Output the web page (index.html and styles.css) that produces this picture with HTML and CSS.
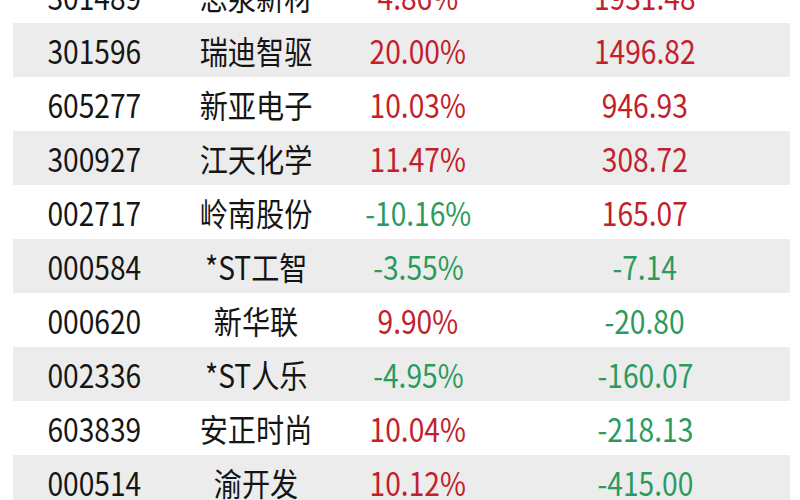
FILE: index.html
```html
<!DOCTYPE html>
<html lang="zh">
<head>
<meta charset="utf-8">
<link rel="stylesheet" href="styles.css">
</head>
<body>
<div class="table">
  <div class="row"><span class="c">301489</span><span class="c">思泉新材</span><span class="c up">4.86%</span><span class="c up">1931.48</span></div>
  <div class="row alt"><span class="c">301596</span><span class="c">瑞迪智驱</span><span class="c up">20.00%</span><span class="c up">1496.82</span></div>
  <div class="row"><span class="c">605277</span><span class="c">新亚电子</span><span class="c up">10.03%</span><span class="c up">946.93</span></div>
  <div class="row alt"><span class="c">300927</span><span class="c">江天化学</span><span class="c up">11.47%</span><span class="c up">308.72</span></div>
  <div class="row"><span class="c">002717</span><span class="c">岭南股份</span><span class="c down">-10.16%</span><span class="c up">165.07</span></div>
  <div class="row alt"><span class="c">000584</span><span class="c">*ST工智</span><span class="c down">-3.55%</span><span class="c down">-7.14</span></div>
  <div class="row"><span class="c">000620</span><span class="c">新华联</span><span class="c up">9.90%</span><span class="c down">-20.80</span></div>
  <div class="row alt"><span class="c">002336</span><span class="c">*ST人乐</span><span class="c down">-4.95%</span><span class="c down">-160.07</span></div>
  <div class="row"><span class="c">603839</span><span class="c">安正时尚</span><span class="c up">10.04%</span><span class="c down">-218.13</span></div>
  <div class="row alt"><span class="c">000514</span><span class="c">渝开发</span><span class="c up">10.12%</span><span class="c down">-415.00</span></div>
</div>
</body>
</html>
```
FILE: styles.css
```css
html, body {
  margin: 0;
  padding: 0;
  background: #ffffff;
  overflow: hidden;
}
body {
  width: 800px;
  height: 500px;
  font-family: "Noto Sans CJK SC", "Noto Sans", sans-serif;
  color: #151515;
}
.table {
  margin: -31px 0 0 13px;
  width: 777px;
}
.row {
  display: grid;
  grid-template-columns: 163px 160px 164px 1fr;
  align-items: center;
  justify-items: center;
  height: 54px;
}
.row.alt {
  background: #ececec;
}
.c {
  display: inline-block;
  font-size: 32px;
  line-height: 1;
  transform: scaleX(0.88);
  white-space: nowrap;
}
.up {
  color: #c2202b;
}
.down {
  color: #2b9a5d;
}
```
